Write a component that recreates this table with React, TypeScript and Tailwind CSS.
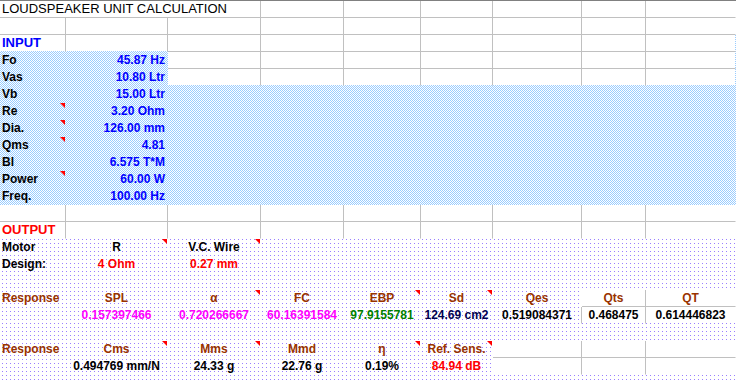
import React from "react";

type Cell = {
  t?: React.ReactNode;
  a?: "l" | "r" | "c";
  k?: "title" | "big" | "norm";
  col?: string;
  w?: boolean;
  r?: boolean;
  b?: boolean;
  tri?: boolean;
  span3?: boolean;
};

function XCell({ c }: { c: Cell }) {
  const align =
    c.a === "r" ? "justify-end pr-[2px]" : c.a === "c" ? "justify-center" : "justify-start pl-[2px]";
  const font =
    c.k === "title"
      ? "text-[13px] font-normal leading-[16px]"
      : c.k === "big"
      ? "text-[13px] font-bold leading-[16px]"
      : "text-[12px] font-bold leading-[15px]";
  return (
    <div
      className={[
        "relative flex h-[17px] items-end whitespace-nowrap border-r border-b",
        c.r ? "border-r-[#c0c0c0]" : "border-r-transparent",
        c.b ? "border-b-[#c0c0c0]" : "border-b-transparent",
        c.w ? "bg-white bg-clip-padding" : "",
        c.span3 ? "col-span-3" : "",
        align,
        font,
        c.col ?? "text-black",
      ].join(" ")}
    >
      <span>{c.t}</span>
      {c.tri && (
        <span className="absolute right-0 top-0 h-0 w-0 border-l-[5px] border-t-[5px] border-l-transparent border-t-[#ff0000]" />
      )}
    </div>
  );
}

function Row({ cells }: { cells: Cell[] }) {
  return (
    <div className="grid grid-cols-[66px_102px_93px_83px_77px_72px_89px_64px_90px]">
      {cells.map((c, i) => (
        <XCell key={i} c={c} />
      ))}
    </div>
  );
}

const W: Cell = { w: true, r: true, b: true };
const WL: Cell = { w: true, r: false, b: true };
const P: Cell = {};

function whiteRow(): Cell[] {
  return [W, W, W, W, W, W, W, W, WL];
}

const BLUE = "text-[#0000ff]";
const RED = "text-[#ff0000]";
const BROWN = "text-[#993300]";
const MAG = "text-[#ff00ff]";
const GREEN = "text-[#008000]";
const NAVY = "text-[#000050]";

const inputRow = (label: string, value: string, tri = false): Cell[] => [
  { t: label, a: "l", tri },
  { t: value, a: "r", col: BLUE },
  P, P, P, P, P, P, P,
];

const inputRowWhite = (label: string, value: string, lastB: boolean): Cell[] => [
  { t: label, a: "l" },
  { t: value, a: "r", col: BLUE },
  { w: true, r: true, b: lastB },
  { w: true, r: true, b: lastB },
  { w: true, r: true, b: lastB },
  { w: true, r: true, b: lastB },
  { w: true, r: true, b: lastB },
  { w: true, r: true, b: lastB },
  { w: true, r: false, b: lastB },
];

const emptyP = (): Cell[] => [P, P, P, P, P, P, P, P, P];

export default function App() {
  return (
    <div className="h-[383px] w-[736px] overflow-hidden border-t border-t-[#808080] bg-white font-['Liberation_Sans',Arial,sans-serif]">
      <Row
        cells={[
          { t: "LOUDSPEAKER UNIT CALCULATION", k: "title", span3: true, w: true, r: true, b: true },
          W, W, W, W, W, WL,
        ]}
      />
      <Row cells={whiteRow()} />

      {/* INPUT block with blue checker pattern */}
      <div className="bg-[image:conic-gradient(#99ccff_25%,#ffffff_0_50%,#99ccff_0_75%,#ffffff_0)] bg-size-[2px_2px]">
        <Row
          cells={[
            { t: "INPUT", k: "big", col: BLUE, w: true, r: true, b: false },
            { w: true, r: true, b: false },
            W, W, W, W, W, W, WL,
          ]}
        />
        <Row cells={inputRowWhite("Fo", "45.87 Hz", true)} />
        <Row cells={inputRowWhite("Vas", "10.80 Ltr", false)} />
        <Row cells={inputRow("Vb", "15.00 Ltr")} />
        <Row cells={inputRow("Re", "3.20 Ohm", true)} />
        <Row cells={inputRow("Dia.", "126.00 mm", true)} />
        <Row cells={inputRow("Qms", "4.81", true)} />
        <Row cells={inputRow("Bl", "6.575 T*M")} />
        <Row cells={inputRow("Power", "60.00 W", true)} />
        <Row cells={inputRow("Freq.", "100.00 Hz")} />
      </div>

      <Row cells={whiteRow()} />

      {/* OUTPUT block with violet dot pattern */}
      <div className="bg-[image:linear-gradient(to_bottom,transparent_1px,#ffffff_1px),linear-gradient(to_right,transparent_1px,#ffffff_1px),linear-gradient(#9a80ff,#9a80ff)] bg-size-[4px_4px] bg-position-[2px_1px]">
        <Row
          cells={[
            { t: "OUTPUT", k: "big", col: RED, w: true, r: true, b: false },
            { w: true, r: true, b: false },
            { w: true, r: true, b: false },
            { w: true, r: true, b: false },
            { w: true, r: true, b: false },
            { w: true, r: true, b: false },
            { w: true, r: true, b: false },
            { w: true, r: true, b: false },
            { w: true, r: false, b: false },
          ]}
        />
        <Row
          cells={[
            { t: "Motor", a: "l" },
            { t: "R", a: "c", tri: true },
            { t: "V.C. Wire", a: "c", tri: true },
            P, P, P, P, P, P,
          ]}
        />
        <Row
          cells={[
            { t: "Design:", a: "l" },
            { t: "4 Ohm", a: "c", col: RED },
            { t: "0.27 mm", a: "c", col: RED },
            P, P, P, P, P, P,
          ]}
        />
        <Row cells={emptyP()} />
        <Row
          cells={[
            { t: "Response", a: "l", col: BROWN },
            { t: "SPL", a: "c", col: BROWN },
            { t: "α", a: "c", col: BROWN, tri: true },
            { t: "FC", a: "c", col: BROWN },
            { t: "EBP", a: "c", col: BROWN, tri: true },
            { t: "Sd", a: "c", col: BROWN, tri: true },
            { t: "Qes", a: "c", col: BROWN },
            { t: "Qts", a: "c", col: BROWN, w: true, r: true, b: true },
            { t: "QT", a: "c", col: BROWN, w: true, r: false, b: true },
          ]}
        />
        <Row
          cells={[
            P,
            { t: "0.157397466", a: "c", col: MAG },
            { t: "0.720266667", a: "c", col: MAG },
            { t: "60.16391584", a: "c", col: MAG },
            { t: "97.9155781", a: "c", col: GREEN },
            { t: "124.69 cm2", a: "c", col: NAVY },
            { t: "0.519084371", a: "c", r: true },
            { t: "0.468475", a: "c", w: true, r: true, b: false },
            { t: "0.614446823", a: "c", w: true, r: false, b: false },
          ]}
        />
        <Row cells={emptyP()} />
        <Row
          cells={[
            { t: "Response", a: "l", col: BROWN },
            { t: "Cms", a: "c", col: BROWN, tri: true },
            { t: "Mms", a: "c", col: BROWN, tri: true },
            { t: "Mmd", a: "c", col: BROWN },
            { t: "η", a: "c", col: BROWN, tri: true },
            { t: "Ref. Sens.", a: "c", col: BROWN, tri: true },
            { w: true, r: true, b: true },
            { w: true, r: true, b: true },
            { w: true, r: false, b: true },
          ]}
        />
        <Row
          cells={[
            P,
            { t: "0.494769 mm/N", a: "c" },
            { t: "24.33 g", a: "c" },
            { t: "22.76 g", a: "c" },
            { t: "0.19%", a: "c" },
            { t: "84.94 dB", a: "c", col: RED },
            { w: true, r: true, b: false },
            { w: true, r: true, b: false },
            { w: true, r: false, b: false },
          ]}
        />
        <Row cells={emptyP()} />
      </div>
    </div>
  );
}
